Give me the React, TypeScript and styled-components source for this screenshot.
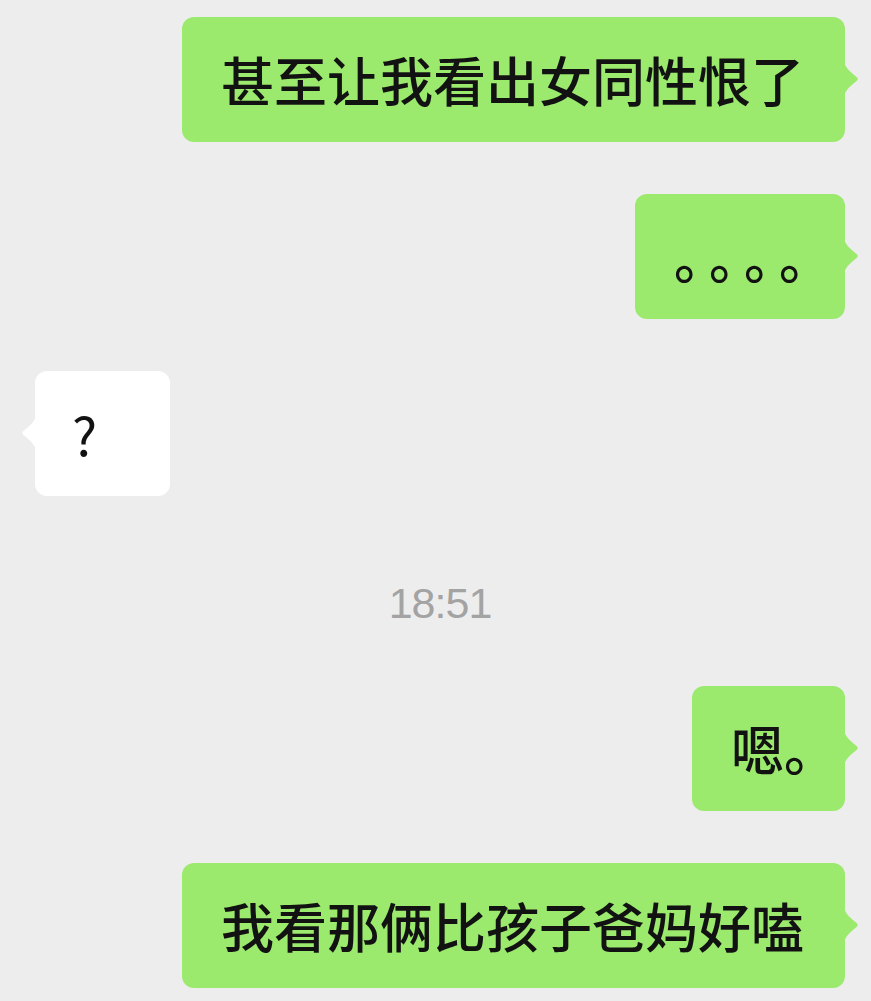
import styled, { createGlobalStyle } from 'styled-components'

const GlobalStyle = createGlobalStyle`
  html, body {
    margin: 0;
    padding: 0;
    background: #ededed;
  }
  body {
    font-family: "Noto Sans CJK SC", "Noto Sans", sans-serif;
  }
`

type Side = 'left' | 'right'

type Message =
  | { kind: 'text'; side: Side; text: string; width?: number; spacing?: number }
  | { kind: 'time'; text: string }

const messages: Message[] = [
  { kind: 'text', side: 'right', text: '甚至让我看出女同性恨了' },
  { kind: 'text', side: 'right', text: '。。。。', spacing: -18, width: 210 },
  { kind: 'text', side: 'left', text: '?', width: 135 },
  { kind: 'time', text: '18:51' },
  { kind: 'text', side: 'right', text: '嗯。', width: 153 },
  { kind: 'text', side: 'right', text: '我看那俩比孩子爸妈好嗑' },
]

const Page = styled.div`
  display: flex;
  flex-direction: column;
  gap: 52px;
  padding: 17px 26px 20px 35px;
`

const Row = styled.div<{ $side: Side }>`
  display: flex;
  justify-content: ${p => (p.$side === 'right' ? 'flex-end' : 'flex-start')};
`

const TimeRow = styled.div`
  display: flex;
  justify-content: center;
  align-items: center;
  height: 62px;
  margin-top: 24px;
  font-family: "Liberation Sans", Arial, sans-serif;
  font-size: 43px;
  letter-spacing: -1px;
  color: #a3a3a3;
`

const Bubble = styled.div<{ $side: Side; $width?: number }>`
  position: relative;
  display: flex;
  align-items: center;
  box-sizing: border-box;
  height: 125px;
  width: ${p => (p.$width ? `${p.$width}px` : 'auto')};
  padding: ${p => (p.$side === 'right' ? '0 41px 0 39px' : '0 30px 0 37px')};
  border-radius: 12px;
  background: ${p => (p.$side === 'right' ? '#9bea6d' : '#ffffff')};
  color: #121212;
  font-size: 53px;
  font-weight: ${p => (p.$side === 'right' ? 500 : 400)};
  line-height: 1;
  white-space: nowrap;
  text-spacing-trim: space-all;
`

const BubbleText = styled.span<{ $spacing: number }>`
  letter-spacing: ${p => p.$spacing}px;
  text-spacing-trim: space-all;
`

const Tail = styled.svg<{ $side: Side }>`
  position: absolute;
  top: 50%;
  width: 16px;
  height: 36px;
  margin-top: -19px;
  ${p => (p.$side === 'right' ? 'right: -15px;' : 'left: -15px; transform: scaleX(-1);')}
`

function BubbleTail({ side }: { side: Side }) {
  return (
    <Tail $side={side} viewBox="0 0 16 36">
      <path
        d="M0 0 C1 6 5 10 12 15.5 Q15.5 18 12 20.5 C5 26 1 30 0 36 Z"
        fill={side === 'right' ? '#9bea6d' : '#ffffff'}
      />
    </Tail>
  )
}

export default function App() {
  return (
    <>
      <GlobalStyle />
      <Page>
        {messages.map((m, i) =>
          m.kind === 'time' ? (
            <TimeRow key={i}>{m.text}</TimeRow>
          ) : (
            <Row key={i} $side={m.side}>
              <Bubble $side={m.side} $width={m.width}>
                <BubbleText $spacing={m.spacing ?? 0}>{m.text}</BubbleText>
                <BubbleTail side={m.side} />
              </Bubble>
            </Row>
          )
        )}
      </Page>
    </>
  )
}
